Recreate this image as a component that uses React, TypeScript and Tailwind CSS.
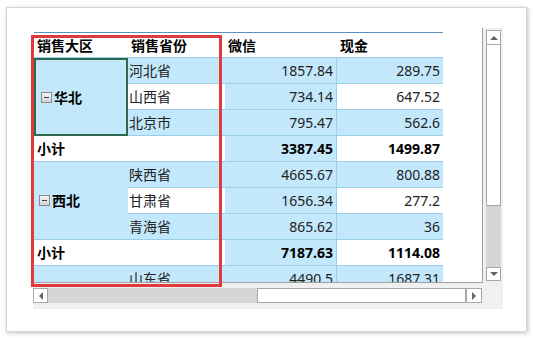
import React from 'react';

type Row = { province: string; wechat: string; cash: string };
type Group = { region: string; rows: Row[]; subtotal?: [string, string] };

const groups: Group[] = [
  {
    region: '华北',
    rows: [
      { province: '河北省', wechat: '1857.84', cash: '289.75' },
      { province: '山西省', wechat: '734.14', cash: '647.52' },
      { province: '北京市', wechat: '795.47', cash: '562.6' },
    ],
    subtotal: ['3387.45', '1499.87'],
  },
  {
    region: '西北',
    rows: [
      { province: '陕西省', wechat: '4665.67', cash: '800.88' },
      { province: '甘肃省', wechat: '1656.34', cash: '277.2' },
      { province: '青海省', wechat: '865.62', cash: '36' },
    ],
    subtotal: ['7187.63', '1114.08'],
  },
  {
    region: '',
    rows: [{ province: '山东省', wechat: '4490.5', cash: '1687.31' }],
  },
];

const font = { fontFamily: '"Noto Sans", "Noto Sans CJK SC", sans-serif' };

const ToggleBox: React.FC = () => (
  <span className="relative inline-block w-[11px] h-[11px] border border-[#8a8a8a] bg-gradient-to-b from-[#f4f4f4] to-[#d4d4d4] mr-[2px]">
    <span className="absolute left-[2px] right-[2px] top-[4px] h-[1px] bg-[#444]" />
  </span>
);

const App: React.FC = () => {
  let idx = 0;
  const cells: React.ReactNode[] = [];

  groups.forEach((g, gi) => {
    const span = g.rows.length;
    g.rows.forEach((r, ri) => {
      const blue = idx % 2 === 0;
      const band = blue ? 'bg-[#c4e8fb]' : 'bg-white';
      if (ri === 0) {
        cells.push(
          <div
            key={`reg-${gi}`}
            className={`bg-[#c4e8fb] flex items-center pl-[5px] font-bold text-[14px] text-black ${
              gi === 0 ? 'border-2 border-[#2d6a4f]' : 'border-b border-[#9ad0ee]'
            }`}
            style={{ gridRow: `span ${span} / span ${span}` }}
          >
            {g.region && (
              <>
                <ToggleBox />
                {g.region}
              </>
            )}
          </div>
        );
      }
      cells.push(
        <div key={`p-${idx}`} className={`${band} h-[26px] border-b border-[#9ad0ee] flex items-center pl-[1px] text-[14px] text-[#222]`}>
          {r.province}
        </div>,
        <div key={`w-${idx}`} className="bg-[#c4e8fb] h-[26px] border-b border-r border-[#9ad0ee] flex items-center justify-end pr-[3px] text-[14px] text-[#222]">
          {r.wechat}
        </div>,
        <div key={`c-${idx}`} className={`${band} h-[26px] border-b border-[#9ad0ee] flex items-center justify-end pr-[3px] text-[14px] text-[#222]`}>
          {r.cash}
        </div>
      );
      idx++;
    });
    if (g.subtotal) {
      cells.push(
        <div key={`s-${gi}`} className="col-span-2 bg-white h-[26px] border-b border-[#9ad0ee] flex items-center pl-[3px] font-bold text-[14px] text-black">
          小计
        </div>,
        <div key={`sw-${gi}`} className="bg-[#c4e8fb] h-[26px] border-b border-r border-[#9ad0ee] flex items-center justify-end pr-[3px] font-bold text-[14px] text-black">
          {g.subtotal[0]}
        </div>,
        <div key={`sc-${gi}`} className="bg-white h-[26px] border-b border-[#9ad0ee] flex items-center justify-end pr-[3px] font-bold text-[14px] text-black">
          {g.subtotal[1]}
        </div>
      );
      idx++;
    }
  });

  return (
    <div className="w-[533px] h-[338px] bg-white overflow-hidden pt-[7px] pl-[6px]" style={font}>
      <div className="relative w-[521px] h-[325px] bg-white border border-[#d6d6d6] shadow-[1px_1px_4px_rgba(0,0,0,0.25)] pt-[20px] pl-[26px]">
        {/* grid control */}
        <div className="w-[470px] h-[281px] bg-[#f0f0f0] flex flex-col">
          <div className="flex h-[255px]">
            <div className="w-[450px] h-[255px] bg-white border-r border-b border-[#a0a0a0] overflow-hidden pt-[4px] pl-[1px]">
              <div className="w-[409px] grid grid-cols-[94px_97px_112px_106px] border-t border-[#5b8fc2]">
                {['销售大区', '销售省份', '微信', '现金'].map((h) => (
                  <div key={h} className="h-[25px] border-b border-[#9ad0ee] flex items-center pl-[3px] font-bold text-[14px] text-black">
                    {h}
                  </div>
                ))}
                {cells}
              </div>
            </div>
            {/* vertical scrollbar */}
            <div className="w-[20px] pt-[2px] pl-[3px] flex flex-col">
              <div className="w-[15px] h-[15px] bg-white border border-[#a8a8a8] flex items-center justify-center">
                <span className="w-0 h-0 border-l-[4px] border-r-[4px] border-b-[4px] border-l-transparent border-r-transparent border-b-[#666]" />
              </div>
              <div className="w-[15px] h-[161px] bg-white border-x border-b border-[#a8a8a8]" />
              <div className="w-[15px] h-[61px] bg-[#d6d6d6]" />
              <div className="w-[15px] h-[14px] bg-white border border-[#a8a8a8] flex items-center justify-center">
                <span className="w-0 h-0 border-l-[4px] border-r-[4px] border-t-[4px] border-l-transparent border-r-transparent border-t-[#666]" />
              </div>
            </div>
          </div>
          {/* horizontal scrollbar */}
          <div className="pt-[5px]">
            <div className="w-[449px] h-[15px] bg-[#d6d6d6] flex">
              <div className="w-[15px] h-[15px] bg-white border border-[#a8a8a8] flex items-center justify-center">
                <span className="w-0 h-0 border-t-[4px] border-b-[4px] border-r-[4px] border-t-transparent border-b-transparent border-r-[#666]" />
              </div>
              <div className="w-[209px]" />
              <div className="w-[209px] h-[15px] bg-white border border-[#a8a8a8]" />
              <div className="w-[16px] h-[15px] bg-white border border-[#a8a8a8] flex items-center justify-center">
                <span className="w-0 h-0 border-t-[4px] border-b-[4px] border-l-[4px] border-t-transparent border-b-transparent border-l-[#666]" />
              </div>
            </div>
          </div>
        </div>
        {/* red annotation box */}
        <div className="absolute left-[24px] top-[27px] w-[191px] h-[252px] border-[3px] border-[#e0393e] pointer-events-none" />
      </div>
    </div>
  );
};

export default App;
